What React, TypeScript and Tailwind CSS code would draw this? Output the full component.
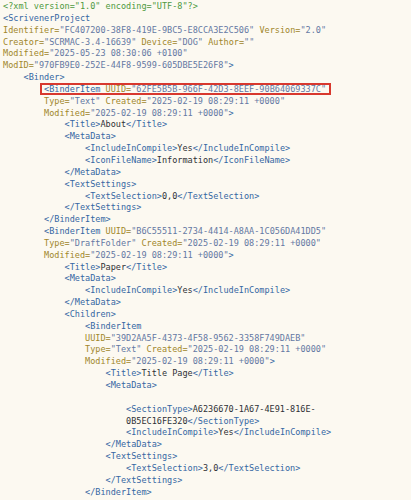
import React from "react";

type Tok = [string, string];
// kinds: d decl, t tag, a attr, s string, x text
const T = (s: string): Tok => ["t", s];
const A = (s: string): Tok => ["a", s];
const S = (s: string): Tok => ["s", s];
const X = (s: string): Tok => ["x", s];
const D = (s: string): Tok => ["d", s];

const cls: Record<string, string> = {
  d: "text-[#4f9a3f]",
  t: "text-[#3567a3]",
  a: "text-[#a1872b]",
  s: "text-[#6478a3]",
  x: "text-[#2f3136]",
};

const lines: { indent: number; toks: Tok[]; box?: boolean }[] = [
  { indent: 0, toks: [D('<?xml version="1.0" encoding="UTF-8"?>')] },
  { indent: 0, toks: [T("<ScrivenerProject")] },
  { indent: 0, toks: [A("Identifier="), S('"FC407200-38F8-419E-9BC5-E8CCA3E2C506"'), X(" "), A("Version="), S('"2.0"')] },
  { indent: 0, toks: [A("Creator="), S('"SCRMAC-3.4-16639"'), X(" "), A("Device="), S('"DOG"'), X(" "), A("Author="), S('""')] },
  { indent: 0, toks: [A("Modified="), S('"2025-05-23 08:30:06 +0100"')] },
  { indent: 0, toks: [A("ModID="), S('"970FB9E0-252E-44F8-9599-605DBE5E26F8"'), T(">")] },
  { indent: 4, toks: [T("<Binder>")] },
  { indent: 8, box: true, toks: [T("<BinderItem"), X(" "), A("UUID="), S('"62FE5B5B-966F-42D3-8EEF-90B64069337C"')] },
  { indent: 8, toks: [A("Type="), S('"Text"'), X(" "), A("Created="), S('"2025-02-19 08:29:11 +0000"')] },
  { indent: 8, toks: [A("Modified="), S('"2025-02-19 08:29:11 +0000"'), T(">")] },
  { indent: 12, toks: [T("<Title>"), X("About"), T("</Title>")] },
  { indent: 12, toks: [T("<MetaData>")] },
  { indent: 16, toks: [T("<IncludeInCompile>"), X("Yes"), T("</IncludeInCompile>")] },
  { indent: 16, toks: [T("<IconFileName>"), X("Information"), T("</IconFileName>")] },
  { indent: 12, toks: [T("</MetaData>")] },
  { indent: 12, toks: [T("<TextSettings>")] },
  { indent: 16, toks: [T("<TextSelection>"), X("0,0"), T("</TextSelection>")] },
  { indent: 12, toks: [T("</TextSettings>")] },
  { indent: 8, toks: [T("</BinderItem>")] },
  { indent: 8, toks: [T("<BinderItem"), X(" "), A("UUID="), S('"B6C55511-2734-4414-A8AA-1C056DA41DD5"')] },
  { indent: 8, toks: [A("Type="), S('"DraftFolder"'), X(" "), A("Created="), S('"2025-02-19 08:29:11 +0000"')] },
  { indent: 8, toks: [A("Modified="), S('"2025-02-19 08:29:11 +0000"'), T(">")] },
  { indent: 12, toks: [T("<Title>"), X("Paper"), T("</Title>")] },
  { indent: 12, toks: [T("<MetaData>")] },
  { indent: 16, toks: [T("<IncludeInCompile>"), X("Yes"), T("</IncludeInCompile>")] },
  { indent: 12, toks: [T("</MetaData>")] },
  { indent: 12, toks: [T("<Children>")] },
  { indent: 16, toks: [T("<BinderItem")] },
  { indent: 16, toks: [A("UUID="), S('"39D2AA5F-4373-4F58-9562-3358F749DAEB"')] },
  { indent: 16, toks: [A("Type="), S('"Text"'), X(" "), A("Created="), S('"2025-02-19 08:29:11 +0000"')] },
  { indent: 16, toks: [A("Modified="), S('"2025-02-19 08:29:11 +0000"'), T(">")] },
  { indent: 20, toks: [T("<Title>"), X("Title Page"), T("</Title>")] },
  { indent: 20, toks: [T("<MetaData>")] },
  { indent: 0, toks: [] },
  { indent: 24, toks: [T("<SectionType>"), X("A6236670-1A67-4E91-816E-")] },
  { indent: 24, toks: [X("0B5EC16FE320"), T("</SectionType>")] },
  { indent: 24, toks: [T("<IncludeInCompile>"), X("Yes"), T("</IncludeInCompile>")] },
  { indent: 20, toks: [T("</MetaData>")] },
  { indent: 20, toks: [T("<TextSettings>")] },
  { indent: 24, toks: [T("<TextSelection>"), X("3,0"), T("</TextSelection>")] },
  { indent: 20, toks: [T("</TextSettings>")] },
  { indent: 16, toks: [T("</BinderItem>")] },
];

export default function App() {
  return (
    <div className="w-[411px] h-[500px] overflow-hidden bg-[#fcf9f1] pl-[3px] pt-[1px] font-['DejaVu_Sans_Mono',monospace] text-[8.52px] leading-[11.85px] whitespace-pre">
      {lines.map((l, i) => (
        <div key={i} className="h-[11.85px]">
          {" ".repeat(l.indent)}
          {l.box ? (
            <span className="relative">
              <span className="absolute left-[-4px] right-[-5px] top-[-1px] bottom-[-1px] border-2 border-[#d8382e]" />
              {l.toks.map((t, j) => (
                <span key={j} className={cls[t[0]]}>{t[1]}</span>
              ))}
            </span>
          ) : (
            l.toks.map((t, j) => (
              <span key={j} className={cls[t[0]]}>{t[1]}</span>
            ))
          )}
        </div>
      ))}
    </div>
  );
}
